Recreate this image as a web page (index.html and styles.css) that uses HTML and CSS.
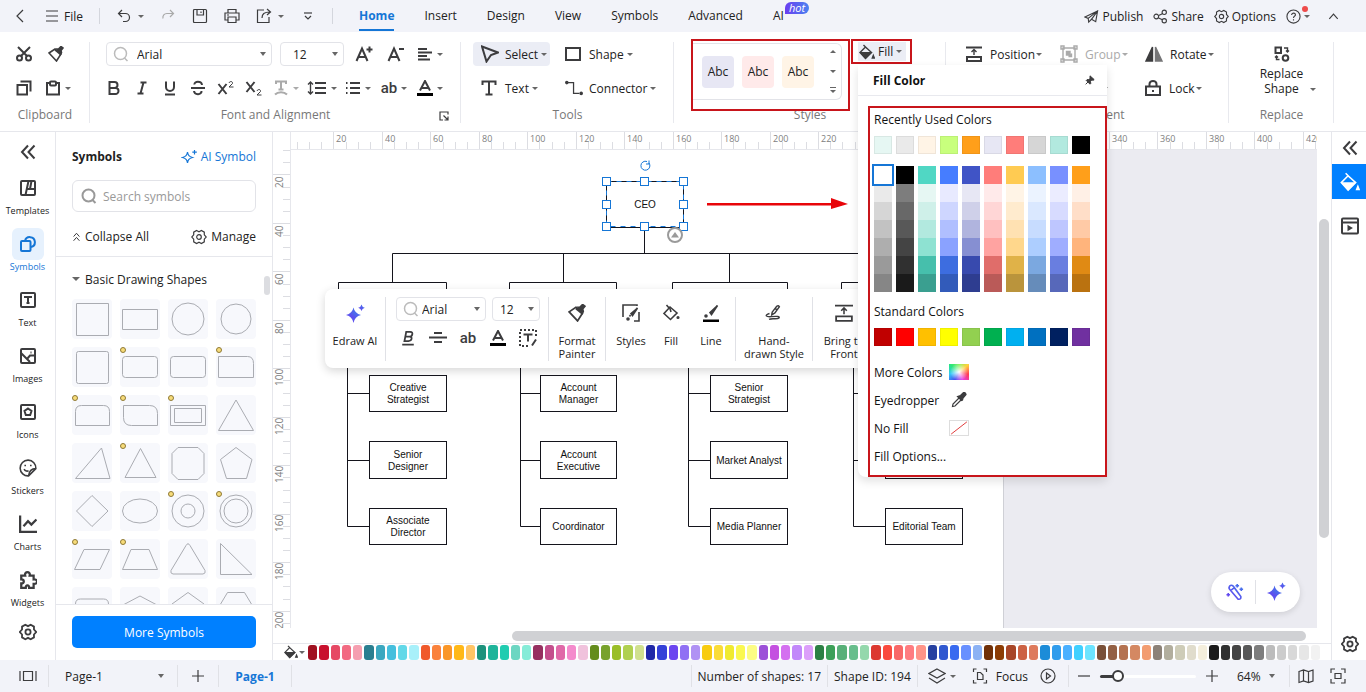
FILE: index.html
```html
<!DOCTYPE html>
<html lang="en">
<head>
    <meta charset="UTF-8">
    <title>Org Chart Editor</title>
    <link rel="stylesheet" href="styles.css">
</head>
<body>
    <!-- Icon set -->
    <svg class="sprite" aria-hidden="true">
        <defs>
            <linearGradient id="ai" x1="0" y1="1" x2="1" y2="0">
                <stop offset="0" stop-color="#6a3df0"/>
                <stop offset="1" stop-color="#3f7bea"/>
            </linearGradient>
            <symbol id="i-back" viewBox="0 0 16 16"><path d="M11 2 5 8l6 6"/></symbol>
            <symbol id="i-menu" viewBox="0 0 16 16"><path d="M2 3h12M2 8h12M2 13h12"/></symbol>
            <symbol id="i-undo" viewBox="0 0 16 16"><path d="M6 2 2.500 5.500 6 9M3 5.500h6.500a4 4 0 0 1 0 8H7"/></symbol>
            <symbol id="i-redo" viewBox="0 0 16 16"><path d="m10 2 3.500 3.500L10 9M13 5.500H7a4 4 0 0 0-4 5"/></symbol>
            <symbol id="i-save" viewBox="0 0 16 16"><path d="M1.500 2.500q0-1 1-1h11q1 0 1 1v11q0 1-1 1h-11q-1 0-1-1zM5 1.500v5.500h6.500V1.500M9 3.500v1.500"/></symbol>
            <symbol id="i-print" viewBox="0 0 16 16"><path d="M4 5V1.500h8V5M4 12H1V5h14v7h-3M4 9h8v5.500H4zM3 7h2"/></symbol>
            <symbol id="i-export" viewBox="0 0 16 16"><path d="M8 2H1.500v12.500H13V9M6 10c0-4 2-6 8-6M11 1l3.500 3L11 7"/></symbol>
            <symbol id="i-more" viewBox="0 0 10 10"><path d="M1 2h8"/><path d="m2 5 3 3 3-3"/></symbol>
            <symbol id="i-send" viewBox="0 0 16 16"><path d="M1 8.500 14.500 2 12.500 13.500 8 11l-3 3-.5-4zM4.500 10l10-8L8 11"/></symbol>
            <symbol id="i-share" viewBox="0 0 16 16"><circle cx="3.500" cy="8" r="2.500"/><circle cx="12" cy="3.500" r="2.300"/><circle cx="12" cy="12.500" r="2.300"/><path d="m6 7 4-2M6 9.500l4 2"/></symbol>
            <symbol id="i-gear" viewBox="0 0 16 16"><path d="M5.600 1.500 8 2.800l2.400-1.300 2.900 1.700v2.600l2 2.200-2 2.200v2.600l-2.900 1.700L8 13.200l-2.400 1.300-2.900-1.700v-2.600L.7 8l2-2.200V3.200z"/><circle cx="8" cy="8" r="2.300"/></symbol>
            <symbol id="i-help" viewBox="0 0 16 16"><circle cx="8" cy="8" r="7"/><path d="M6 6.500c0-3 4.500-2.500 4 0C9.800 7.500 8 8 8 9.500M8 11v1.200"/></symbol>
            <symbol id="i-up" viewBox="0 0 16 16"><path d="m3.500 10.500 4.500-5 4.500 5"/></symbol>
            <symbol id="i-cut" viewBox="0 0 16 16"><path d="m2 1 9 9M14 1l-9 9"/><circle cx="3.500" cy="12" r="2.500"/><circle cx="12.500" cy="12" r="2.500"/></symbol>
            <symbol id="i-brush" viewBox="0 0 16 16"><path d="M1 7 7 3l6 5-4.500 7z"/><path d="m7 4 6 5"/><path class="solid" d="m9 3 1.500 0L13 .5l2 1.500-2 2.500.5 2-1 1.500z"/></symbol>
            <symbol id="i-copy" viewBox="0 0 16 16"><path d="M1.500 5h9.500v9.500H1.500zM4.500 1.500h10v10"/></symbol>
            <symbol id="i-paste" viewBox="0 0 16 16"><path d="M5 3H2v11.500h12V3h-3"/><rect x="5" y="1.500" width="6" height="4" rx="1"/></symbol>
            <symbol id="i-search" viewBox="0 0 16 16"><circle cx="7.500" cy="7.500" r="6"/><path d="m11.500 12 3 3"/></symbol>
            <symbol id="i-grow" viewBox="0 0 18 16"><path d="M1.500 15 7 2.500 12.500 15M3.500 11h7M11.500 3.500h6M14.500.5v6"/></symbol>
            <symbol id="i-shrink" viewBox="0 0 18 16"><path d="M1.500 15 7 2.500 12.500 15M3.500 11h7M12 3h5"/></symbol>
            <symbol id="i-align" viewBox="0 0 16 16"><path d="M1 3h9M1 6.500h14M1 10h9M1 13.500h12"/></symbol>
            <symbol id="i-bold" viewBox="0 0 16 16"><path d="M3.500 2h5a2.800 2.800 0 0 1 0 6h-5zM3.500 8H9.500a3 3 0 0 1 0 6h-6z"/></symbol>
            <symbol id="i-italic" viewBox="0 0 16 16"><path d="M6.500 2.500h6M3.500 13.500h6M9.500 2.500l-3 11"/></symbol>
            <symbol id="i-under" viewBox="0 0 16 16"><path d="M4 1.500V7a4 4 0 0 0 8 0V1.500M3 14.500h10"/></symbol>
            <symbol id="i-strike" viewBox="0 0 16 16"><path d="M1 8h14M12 5c-.5-4.500-8-4-7.500-.5M4 11c.5 4.500 8 4 7.500 0"/></symbol>
            <symbol id="i-sup" viewBox="0 0 18 16"><path d="m1.500 4 8 10M9.500 4l-8 10"/><path class="thin" d="M12 3c.5-2 4-2 3.500.5L12 7h4.500"/></symbol>
            <symbol id="i-sub" viewBox="0 0 18 16"><path d="m1.500 2 8 10M9.500 2l-8 10"/><path class="thin" d="M12 11c.5-2 4-2 3.500.5L12 15h4.500"/></symbol>
            <symbol id="i-curve" viewBox="0 0 16 16"><path d="M3 4V1.500h10V4M8 1.500V9M5.500 9.500h5"/><path d="M2 14.500c3-3 9-3 12 0"/></symbol>
            <symbol id="i-spacing" viewBox="0 0 20 16"><path d="M8 3h11M8 8h11M8 13h11"/><path class="mid" d="M3.500 2v12M1 4.500 3.500 2 6 4.500M1 11.500 3.500 14 6 11.500"/></symbol>
            <symbol id="i-list" viewBox="0 0 16 16"><path d="M5 3h10M5 8h10M5 13h10M1 3h1.500M1 8h1.500M1 13h1.500"/></symbol>
            <symbol id="i-color" viewBox="0 0 16 16"><path d="M3 10.500 8 1l5 9.500M4.500 8h7"/><path class="bar" d="M0 14.500h16"/></symbol>
            <symbol id="i-launch" viewBox="0 0 10 10"><path d="M4 9H1V1h8v2.500M4.500 4.500 9 9M9 5.500V9H5.500"/></symbol>
            <symbol id="i-cursor" viewBox="0 0 18 18"><path d="M1 1.500 17 7.500l-7 2.500-4.500 6.500z"/></symbol>
            <symbol id="i-rect" viewBox="0 0 16 16"><path d="M1 2h14v12H1z"/></symbol>
            <symbol id="i-text" viewBox="0 0 16 16"><path d="M1.500 5V1.500h13V5M8 1.500v13M4.500 14.500h7"/></symbol>
            <symbol id="i-conn" viewBox="0 0 20 16"><path class="mid" d="M3 2h6.500v12H16"/><circle class="solid" cx="2" cy="2" r="1"/><circle class="solid" cx="18" cy="14" r="1"/></symbol>
            <symbol id="i-bucket" viewBox="0 0 16 16"><path d="m6.500 3 6 5.500-6 6L1 8.500zM4.500 1l3.500 3.500"/><path class="solid" d="M2 8.800h9.800L6.500 14z"/><path class="solid" d="M14.300 11.500 15.300 14h-2z"/></symbol>
            <symbol id="i-position" viewBox="0 0 16 16"><path d="M0 1.500h16M1 11h14v4H1z"/><path class="mid" d="M8 9V4M5.500 6 8 3.500 10.500 6"/></symbol>
            <symbol id="i-group" viewBox="0 0 18 18"><path class="mid" d="M3 3h12v12H3zM1 1h3v3H1zM14 1h3v3h-3zM1 14h3v3H1zM14 14h3v3h-3z"/><path class="solid mid" d="M6.500 6.500h3.500v3.500H6.500zM8.500 11.500h3V8.500"/></symbol>
            <symbol id="i-rotate" viewBox="0 0 18 16"><path class="solid mid" d="M7.500 1v14H1z"/><path class="solid mid faded" d="M10.500 1v14H17z"/></symbol>
            <symbol id="i-lock" viewBox="0 0 16 16"><path d="M1 6.500h14v8.500H1zM4.500 6.500V4a3.500 3 0 0 1 7 0v2.500M8 10v2"/></symbol>
            <symbol id="i-replace" viewBox="0 0 16 16"><path d="M1.500 1.500h5.500v5.500H1.500z"/><circle cx="11.500" cy="12" r="2.800"/><path class="mid" d="M10 2h3.500v4M12 4.500 13.500 6 15 4.500M5.500 13.500H2.500V10M1 11.500 2.500 10 4 11.500"/></symbol>
            <symbol id="i-pin" viewBox="0 0 12 12"><path class="solid" d="m6 1 5 4.500-1 .8-2-.3-1.500 2L7 10 6 11 1.500 6.500 2.500 5.500 4.500 5.500 6 4z"/><path d="M4 8 .8 11.200"/></symbol>
            <symbol id="i-dropper" viewBox="0 0 16 16"><path class="solid" d="m8 4 1.500-.5 3-3q2-.3 2.500 2l-3 3.500-.5 2-1 .5-4-4z"/><path d="M8 6 2 12l-.5 2.500L4 14l6-6"/></symbol>
            <symbol id="i-collapse" viewBox="0 0 16 16"><path d="M8 1.500 2 8l6 6.500M14.500 1.500 8.500 8l6 6.500"/></symbol>
            <symbol id="i-foldup" viewBox="0 0 10 12"><path d="m1.500 5.500 3.500-4 3.500 4M1.500 10.500l3.500-4 3.500 4"/></symbol>
            <symbol id="i-template" viewBox="0 0 16 16"><rect x="1" y="1" width="14" height="14" rx="1"/><path d="M8.500 1 5.500 15M7 9h8M11.500 1l-1.500 8"/></symbol>
            <symbol id="i-symbols" viewBox="0 0 16 16"><rect x="1" y="5" width="9.500" height="10" rx="1"/><path d="M5 5a5 5 0 1 1 6 6"/></symbol>
            <symbol id="i-textbox" viewBox="0 0 16 16"><rect x="1" y="1" width="14" height="14" rx="1"/><path d="M5 6V5h6v1M8 5v6M6.500 11h3"/></symbol>
            <symbol id="i-image" viewBox="0 0 16 16"><rect x="1" y="1" width="14" height="14" rx="1"/><path d="m1 5 9 9M7 11l3-3.500h4M10.500 4.500h1"/></symbol>
            <symbol id="i-icons" viewBox="0 0 16 16"><rect x="1" y="1" width="14" height="14" rx="1"/><path d="m8 4.500 3.500 2.500-1.300 4H5.800L4.500 7z"/></symbol>
            <symbol id="i-sticker" viewBox="0 0 16 16"><path class="mid" d="M15 8.500a7 7 0 1 0-6.500 6.500zM15 8.500c-4 0-6 2-6.500 6.500M5.500 5v1.500M10.500 5v1.500M4.500 9c1 2 3 2 4 1.500"/></symbol>
            <symbol id="i-chart" viewBox="0 0 16 16"><path d="M1 .5V15h15M4 10l4-4.500 3 3 4.500-4.500"/></symbol>
            <symbol id="i-widget" viewBox="0 0 16 16"><path d="M2 4h3.500c-1-4 5-4 4 0H13v3.500c4-.5 4 4.500 0 4V15H9c0-3-3-3-3 0H2v-4c3 0 3-3.500 0-3.500z"/></symbol>
            <symbol id="i-spark" viewBox="0 0 16 16"><path d="M6.500 3c.6 3.500 1.500 4.500 5 5.500-3.500 1-4.400 2-5 5.500-.6-3.500-1.500-4.500-5-5.500 3.500-1 4.400-2 5-5.500zM13.500 1v4.500M11.300 3.200h4.500"/></symbol>
            <symbol id="i-aistar" viewBox="0 0 20 20"><path d="M8.500 3.500q1.200 6 7.500 7.500-6.300 1.500-7.500 8Q7.300 12.500 1 11q6.300-1.500 7.500-7.500z"/><path d="M7 8h3l2.500 3L10 14H7l-2.500-3z"/><path d="M16.500.5q.5 2.500 3.300 3.200-2.800.8-3.300 3.300-.5-2.500-3.300-3.300Q16 3 16.500.5z"/></symbol>
            <symbol id="i-wand" viewBox="0 0 20 20"><path d="M4 3.500q2-2 4 0l8.500 11.500q.5 3.500-3 3L4.500 7.500Q2.500 5.500 4 3.500zM5 8.500 9 5.500M12.500 1v4M10.500 3h4M17 5v4M15 7h4M2.500 11v4M.5 13h4"/></symbol>
            <symbol id="i-styles" viewBox="0 0 18 18"><path d="M1 13V1h14v1M17 8v9h-5"/><path class="solid" d="M15.500 4 9 9.500l1.500 2z"/><circle class="solid" cx="6" cy="15" r="1"/><path d="m8.500 11-1 1.500"/></symbol>
            <symbol id="i-fill" viewBox="0 0 18 18"><path d="m8 3 7 6-6.500 6.500L2 9.500zM4.500 1l3 3.500"/><path d="m7.500 3 1.500 5"/><circle class="solid" cx="16" cy="13.500" r=".8"/></symbol>
            <symbol id="i-line" viewBox="0 0 18 18"><path class="solid" d="m15.500 1.500-7.500 7 1.500 2z"/><circle class="solid" cx="4" cy="12" r="1"/><path class="bar" d="M1 17h16"/></symbol>
            <symbol id="i-hand" viewBox="0 0 20 18"><path d="m8 8 5-6.500q2-1.500 3 .5l-5 7-3.500 2zM5 9.500c-6 2-4 4 2 3.500s10-.5 8.500 1.500-8 0-11 1.500M11.500 4l2.500 2"/></symbol>
            <symbol id="i-ubold" viewBox="0 0 16 18"><path d="M6 2h4.500q3 .2 2.300 3T9 7.500H5zM5 7.500h5q2.500.3 2 2.500t-3.500 2.500H4zM1.500 16.500h13"/></symbol>
            <symbol id="i-center" viewBox="0 0 18 16"><path d="M5 3h8M0 7.500h18M5 12h8"/></symbol>
            <symbol id="i-editbox" viewBox="0 0 18 18"><path stroke-dasharray="2 2" d="M17 7V1H1v16h9"/><path d="M5.500 6.500V5.500h7v1M9 5.500v7M13 16.500l4-6"/></symbol>
            <symbol id="i-pages" viewBox="0 0 18 12"><path d="M1 1v10M4.500 1.500h9v9h-9zM17 1v10"/></symbol>
            <symbol id="i-plus" viewBox="0 0 14 14"><path d="M1 7h12M7 1v12"/></symbol>
            <symbol id="i-minus" viewBox="0 0 14 14"><path d="M1 7h12"/></symbol>
            <symbol id="i-layers" viewBox="0 0 18 16"><path d="m9 1 8 4.500L9 10 1 5.500zM1 10l8 5 8-5"/></symbol>
            <symbol id="i-focus" viewBox="0 0 16 16"><path d="M4.500 1H1.500v3M1.500 12v3h3M11.500 1h3v3M14.500 12v3h-3M5.500 4.500h3L11 7v4.500H5.500z"/></symbol>
            <symbol id="i-play" viewBox="0 0 16 16"><circle cx="8" cy="8" r="7"/><path d="m6.500 5 4 3-4 3z"/></symbol>
            <symbol id="i-map" viewBox="0 0 16 14"><path d="m1 2.500 4.500-1.500 5 1.500L15 1v11l-4.500 1.500-5-1.500L1 13.500zM5.500 1v11M10.500 2.500v11"/></symbol>
            <symbol id="i-fit" viewBox="0 0 16 16"><path d="M5 1H1v4M11 1h4v4M1 11v4h4M15 11v4h-4M5 5.500h6v5H5z"/></symbol>
            <symbol id="i-present" viewBox="0 0 18 18"><rect x="1" y="1.500" width="16" height="15" rx="1"/><path d="M1 5.500h16"/><path class="solid" d="m7.500 9.500 2.500 1.500-2.500 1.500z"/></symbol>
        </defs>
    </svg>

    <header class="titlebar">
        <button class="tool" aria-label="Back"><svg class="icon thin"><use href="#i-back"/></svg></button>
        <button class="file-button"><svg class="icon thin"><use href="#i-menu"/></svg>File</button>
        <span class="divider"></span>
        <div class="quick">
            <button class="tool wide" aria-label="Undo"><svg class="icon thin"><use href="#i-undo"/></svg><i class="caret"></i></button>
            <button class="tool off" aria-label="Redo"><svg class="icon thin"><use href="#i-redo"/></svg></button>
            <button class="tool" aria-label="Save"><svg class="icon thin"><use href="#i-save"/></svg></button>
            <button class="tool" aria-label="Print"><svg class="icon thin"><use href="#i-print"/></svg></button>
            <button class="tool wide" aria-label="Export"><svg class="icon thin"><use href="#i-export"/></svg><i class="caret"></i></button>
            <button class="tool" aria-label="More"><svg class="icon small"><use href="#i-more"/></svg></button>
        </div>
        <span class="divider"></span>
        <nav class="tabs">
            <a href="#" class="active">Home</a>
            <a href="#">Insert</a>
            <a href="#">Design</a>
            <a href="#">View</a>
            <a href="#">Symbols</a>
            <a href="#">Advanced</a>
            <a href="#">AI<span class="hot">hot</span></a>
        </nav>
        <div class="title-actions">
            <button><svg class="icon thin"><use href="#i-send"/></svg>Publish</button>
            <button><svg class="icon thin"><use href="#i-share"/></svg>Share</button>
            <button><svg class="icon thin"><use href="#i-gear"/></svg>Options</button>
            <button class="help" aria-label="Help"><svg class="icon thin"><use href="#i-help"/></svg><i class="caret"></i></button>
            <button aria-label="Collapse ribbon"><svg class="icon thin"><use href="#i-up"/></svg></button>
        </div>
    </header>

    <section class="ribbon">
        <div class="group clipboard">
            <div class="row">
                <button class="tool" aria-label="Cut"><svg class="icon"><use href="#i-cut"/></svg></button>
                <button class="tool" aria-label="Format painter"><svg class="icon medium"><use href="#i-brush"/></svg></button>
            </div>
            <div class="row">
                <button class="tool" aria-label="Copy"><svg class="icon"><use href="#i-copy"/></svg></button>
                <button class="tool wide" aria-label="Paste"><svg class="icon"><use href="#i-paste"/></svg><i class="caret"></i></button>
            </div>
            <p class="group-name">Clipboard</p>
        </div>

        <div class="group font">
            <div class="row">
                <div class="combo family"><svg class="icon"><use href="#i-search"/></svg><select aria-label="Font"><option>Arial</option></select></div>
                <div class="combo size"><select aria-label="Font size"><option>12</option></select></div>
                <button class="tool" aria-label="Increase font size"><svg class="icon broad"><use href="#i-grow"/></svg></button>
                <button class="tool" aria-label="Decrease font size"><svg class="icon broad"><use href="#i-shrink"/></svg></button>
                <button class="tool wide" aria-label="Align"><svg class="icon"><use href="#i-align"/></svg><i class="caret"></i></button>
            </div>
            <div class="row marks">
                <button class="tool" aria-label="Bold"><svg class="icon"><use href="#i-bold"/></svg></button>
                <button class="tool" aria-label="Italic"><svg class="icon"><use href="#i-italic"/></svg></button>
                <button class="tool" aria-label="Underline"><svg class="icon"><use href="#i-under"/></svg></button>
                <button class="tool" aria-label="Strikethrough"><svg class="icon"><use href="#i-strike"/></svg></button>
                <button class="tool" aria-label="Superscript"><svg class="icon broad"><use href="#i-sup"/></svg></button>
                <button class="tool" aria-label="Subscript"><svg class="icon broad"><use href="#i-sub"/></svg></button>
                <button class="tool wide off" aria-label="Curved text"><svg class="icon"><use href="#i-curve"/></svg><i class="caret"></i></button>
                <button class="tool wide" aria-label="Line spacing"><svg class="icon large"><use href="#i-spacing"/></svg><i class="caret"></i></button>
                <button class="tool wide" aria-label="List"><svg class="icon"><use href="#i-list"/></svg><i class="caret"></i></button>
                <button class="tool wide case">ab<i class="caret"></i></button>
                <button class="tool wide" aria-label="Font color"><svg class="icon"><use href="#i-color"/></svg><i class="caret"></i></button>
            </div>
            <p class="group-name">Font and Alignment</p>
            <button class="launcher" aria-label="Font settings"><svg class="icon small"><use href="#i-launch"/></svg></button>
        </div>

        <div class="group tools">
            <div class="row">
                <button class="command selected"><svg class="icon broad"><use href="#i-cursor"/></svg>Select<i class="caret"></i></button>
                <button class="command"><svg class="icon"><use href="#i-rect"/></svg>Shape<i class="caret"></i></button>
            </div>
            <div class="row">
                <button class="command"><svg class="icon"><use href="#i-text"/></svg>Text<i class="caret"></i></button>
                <button class="command"><svg class="icon broad"><use href="#i-conn"/></svg>Connector<i class="caret"></i></button>
            </div>
            <p class="group-name">Tools</p>
        </div>

        <div class="group styles">
            <div class="styles-body">
                <div class="gallery">
                    <button class="style lilac">Abc</button>
                    <button class="style rose">Abc</button>
                    <button class="style cream">Abc</button>
                    <div class="gallery-nav">
                        <button aria-label="Previous styles"><i class="caret up"></i></button>
                        <button aria-label="Next styles"><i class="caret"></i></button>
                        <button aria-label="All styles"><i class="caret lined"></i></button>
                    </div>
                    <span class="callout"></span>
                </div>
                <div class="fill">
                    <button class="fill-button"><svg class="icon"><use href="#i-bucket"/></svg>Fill<i class="caret"></i></button>
                    <span class="callout"></span>
                    <div class="popover">
                        <div class="popover-head">Fill Color<button aria-label="Pin"><svg class="icon small"><use href="#i-pin"/></svg></button></div>
                        <div class="popover-body">
                            <h3>Recently Used Colors</h3>
                            <div class="swatches" id="recent"></div>
                            <div class="swatches theme" id="theme"></div>
                            <h3>Standard Colors</h3>
                            <div class="swatches" id="standard"></div>
                            <div class="fill-options">
                                <button><span>More Colors</span><i class="spectrum"></i></button>
                                <button><span>Eyedropper</span><svg class="icon"><use href="#i-dropper"/></svg></button>
                                <button><span>No Fill</span><svg class="no-fill" viewBox="0 0 20 16"><path d="M1 15 19 1"/></svg></button>
                                <button><span>Fill Options...</span></button>
                            </div>
                        </div>
                    </div>
                </div>
            </div>
            <p class="group-name">Styles</p>
        </div>

        <div class="group arrange">
            <div class="row">
                <button class="command"><svg class="icon"><use href="#i-position"/></svg>Position<i class="caret"></i></button>
                <button class="command off"><svg class="icon broad"><use href="#i-group"/></svg>Group<i class="caret"></i></button>
                <button class="command"><svg class="icon broad"><use href="#i-rotate"/></svg>Rotate<i class="caret"></i></button>
            </div>
            <div class="row">
                <button class="command" aria-label="Align"><svg class="icon"><use href="#i-align"/></svg></button>
                <button class="command size-command" aria-label="Size"><svg class="icon"><use href="#i-rect"/></svg><i class="caret"></i></button>
                <button class="command"><svg class="icon"><use href="#i-lock"/></svg>Lock<i class="caret"></i></button>
            </div>
            <p class="group-name">Arrangement</p>
        </div>

        <div class="group replace">
            <button class="replace-button">
                <svg class="icon"><use href="#i-replace"/></svg>
                <span>Replace<br>Shape</span>
                <i class="caret"></i>
            </button>
            <p class="group-name">Replace</p>
        </div>
    </section>

    <main>
        <nav class="rail">
            <button class="rail-top" aria-label="Collapse"><svg class="icon"><use href="#i-collapse"/></svg></button>
            <a href="#"><span><svg class="icon"><use href="#i-template"/></svg></span>Templates</a>
            <a href="#" class="active"><span><svg class="icon"><use href="#i-symbols"/></svg></span>Symbols</a>
            <a href="#"><span><svg class="icon"><use href="#i-textbox"/></svg></span>Text</a>
            <a href="#"><span><svg class="icon"><use href="#i-image"/></svg></span>Images</a>
            <a href="#"><span><svg class="icon"><use href="#i-icons"/></svg></span>Icons</a>
            <a href="#"><span><svg class="icon broad"><use href="#i-sticker"/></svg></span>Stickers</a>
            <a href="#"><span><svg class="icon broad"><use href="#i-chart"/></svg></span>Charts</a>
            <a href="#"><span><svg class="icon broad"><use href="#i-widget"/></svg></span>Widgets</a>
            <button class="rail-bottom" aria-label="Settings"><svg class="icon broad medium"><use href="#i-gear"/></svg></button>
        </nav>

        <aside class="library">
            <div class="library-head">
                <div class="between">
                    <h2>Symbols</h2>
                    <a href="#" class="ai-link"><svg class="icon thin"><use href="#i-spark"/></svg>AI Symbol</a>
                </div>
                <label class="search">
                    <svg class="icon"><use href="#i-search"/></svg>
                    <input type="text" placeholder="Search symbols" aria-label="Search symbols">
                </label>
                <div class="between">
                    <button><svg class="icon small"><use href="#i-foldup"/></svg>Collapse All</button>
                    <button><svg class="icon thin"><use href="#i-gear"/></svg>Manage</button>
                </div>
            </div>
            <div class="library-body">
                <button class="section"><i class="caret big"></i>Basic Drawing Shapes</button>
                <div class="shapes" id="shapes"></div>
                <span class="thumb"></span>
            </div>
            <div class="library-foot"><button>More Symbols</button></div>
        </aside>

        <section class="workspace">
            <div class="ruler-top"><svg id="ruler-x"></svg></div>
            <div class="stage">
                <div class="ruler-left"><svg id="ruler-y"></svg></div>
                <div class="canvas">
                    <div class="paper"></div>
                    <svg class="diagram" id="diagram">
                        <g class="wires">
                            <path d="M353.500 77v26M101.500 132v-28.500h510V132M272.500 103.500V132M438.500 103.500V132"/>
                            <path d="M47.500 132.500h108v46h-108zM218.500 132.500h107v46h-107zM381.500 132.500h115v46h-115zM550.500 132.500h121v46h-121z"/>
                            <path d="M56.500 178.500v198h22M56.500 243.500h22M56.500 310.500h22"/>
                            <path d="M229.500 178.500v198h20M229.500 243.500h20M229.500 310.500h20"/>
                            <path d="M397.500 178.500v198h22M397.500 243.500h22M397.500 310.500h22"/>
                            <path d="M562.500 178.500v198h32M562.500 243.500h32M562.500 310.500h32"/>
                        </g>
                        <g id="nodes"></g>
                        <g class="selection">
                            <rect x="315.500" y="31.500" width="77" height="45"/>
                            <g id="handles"></g>
                            <path class="spin" d="M358 13a4.500 4.500 0 1 1-2-1.500M358 10.500v3.500h-3"/>
                        </g>
                        <g class="fold">
                            <circle cx="384" cy="85" r="7"/>
                            <path d="m380 87.500 4-5.500 4 5.500z"/>
                        </g>
                        <path class="arrow" d="M416 53h124v-5l17 6-17 5v-3.500H416z"/>
                    </svg>

                    <div class="floatbar">
                        <button class="float-item ai"><svg class="icon ai-icon"><use href="#i-aistar"/></svg>Edraw AI</button>
                        <span class="divider"></span>
                        <div class="float-font">
                            <div class="row">
                                <div class="combo family"><svg class="icon"><use href="#i-search"/></svg><select aria-label="Font"><option>Arial</option></select></div>
                                <div class="combo size"><select aria-label="Font size"><option>12</option></select></div>
                            </div>
                            <div class="row">
                                <button class="tool" aria-label="Bold"><svg class="icon"><use href="#i-ubold"/></svg></button>
                                <button class="tool" aria-label="Center"><svg class="icon broad"><use href="#i-center"/></svg></button>
                                <button class="tool case">ab</button>
                                <button class="tool" aria-label="Font color"><svg class="icon"><use href="#i-color"/></svg></button>
                                <button class="tool" aria-label="Edit text"><svg class="icon broad"><use href="#i-editbox"/></svg></button>
                            </div>
                        </div>
                        <span class="divider"></span>
                        <button class="float-item painter"><svg class="icon"><use href="#i-brush"/></svg>Format<br>Painter</button>
                        <span class="divider"></span>
                        <button class="float-item"><svg class="icon"><use href="#i-styles"/></svg>Styles</button>
                        <button class="float-item"><svg class="icon"><use href="#i-fill"/></svg>Fill</button>
                        <button class="float-item"><svg class="icon"><use href="#i-line"/></svg>Line</button>
                        <span class="divider"></span>
                        <button class="float-item hand"><svg class="icon"><use href="#i-hand"/></svg>Hand-<br>drawn Style</button>
                        <span class="divider"></span>
                        <button class="float-item front"><svg class="icon"><use href="#i-position"/></svg>Bring to<br>Front</button>
                    </div>

                    <div class="assist">
                        <button aria-label="Magic wand"><svg class="icon broad ai-line"><use href="#i-wand"/></svg></button>
                        <span class="divider"></span>
                        <button aria-label="AI"><svg class="icon large ai-icon"><use href="#i-aistar"/></svg></button>
                    </div>
                </div>
                <div class="scroll-y"><span></span></div>
            </div>
            <div class="scroll-x"><span></span></div>
            <div class="palette">
                <button aria-label="Fill color"><svg class="icon"><use href="#i-bucket"/></svg><i class="caret"></i></button>
                <div class="palette-colors" id="palette"></div>
            </div>
        </section>

        <nav class="right-rail">
            <button aria-label="Expand"><svg class="icon"><use href="#i-collapse"/></svg></button>
            <button class="active" aria-label="Fill panel"><svg class="icon large"><use href="#i-bucket"/></svg></button>
            <button aria-label="Presentation"><svg class="icon broad"><use href="#i-present"/></svg></button>
            <button class="last" aria-label="Settings"><svg class="icon broad medium"><use href="#i-gear"/></svg></button>
        </nav>
    </main>

    <footer class="statusbar">
        <button class="status-tool" aria-label="Page panel"><svg class="icon broad thin"><use href="#i-pages"/></svg></button>
        <span class="divider"></span>
        <div class="combo page"><select aria-label="Page"><option>Page-1</option></select></div>
        <span class="divider"></span>
        <button class="add" aria-label="Add page"><svg class="icon thin"><use href="#i-plus"/></svg></button>
        <span class="divider"></span>
        <a href="#" class="page-tab">Page-1</a>
        <span class="divider"></span>
        <div class="status-right">
            <span class="divider"></span>
            <span class="stat">Number of shapes: 17</span>
            <span class="divider"></span>
            <span class="stat">Shape ID: 194</span>
            <span class="divider"></span>
            <button class="layers" aria-label="Layers"><svg class="icon broad thin"><use href="#i-layers"/></svg><i class="caret"></i></button>
            <button class="focus"><svg class="icon thin"><use href="#i-focus"/></svg>Focus</button>
            <button class="play" aria-label="Play"><svg class="icon thin"><use href="#i-play"/></svg></button>
            <span class="divider"></span>
            <button class="zoom-step" aria-label="Zoom out"><svg class="icon thin"><use href="#i-minus"/></svg></button>
            <input type="range" min="0" max="100" value="14" aria-label="Zoom">
            <button class="zoom-step" aria-label="Zoom in"><svg class="icon thin"><use href="#i-plus"/></svg></button>
            <div class="combo percent"><select aria-label="Zoom level"><option>64%</option></select></div>
            <span class="divider"></span>
            <button class="status-tool" aria-label="Overview"><svg class="icon thin"><use href="#i-map"/></svg></button>
            <button class="status-tool" aria-label="Fit"><svg class="icon thin"><use href="#i-fit"/></svg></button>
        </div>
    </footer>
    <script src="script.js"></script>
</body>
</html>
```
FILE: styles.css
```css
* {
    box-sizing: border-box;
}
body {
    margin: 0;
    height: 100vh;
    display: flex;
    flex-direction: column;
    overflow: hidden;
    font-family: "Open Sans", "Noto Sans", sans-serif;
    font-size: 12px;
    color: #222;
    background: #fff;
}
button, input, select {
    font: inherit;
    color: inherit;
}
button {
    display: flex;
    align-items: center;
    padding: 0;
    border: none;
    background: none;
    white-space: nowrap;
    cursor: pointer;
}
a {
    color: inherit;
    text-decoration: none;
}
h2, h3, p {
    margin: 0;
    font-size: 12px;
    font-weight: normal;
}

/* Icons */
.sprite {
    position: absolute;
    width: 0;
    height: 0;
}
.icon {
    width: 16px;
    height: 16px;
    flex: none;
    fill: none;
    stroke: currentColor;
    stroke-width: 2;
    color: #3c3c3e;
}
.icon.thin {
    stroke-width: 1.2;
}
.icon.medium {
    stroke-width: 1.6;
}
.icon.broad {
    width: 18px;
    height: 18px;
}
.icon.large {
    width: 20px;
    height: 20px;
}
.icon.small {
    width: 10px;
    height: 10px;
    stroke-width: 1.2;
}
.solid {
    fill: currentColor;
}
.thin {
    stroke-width: 1;
}
.mid {
    stroke-width: 1.4;
}
.faded {
    opacity: 0.7;
}
.bar {
    stroke: #000;
    stroke-width: 3;
}
.ai-icon {
    fill: url(#ai);
    stroke: none;
}
.icon.ai-line {
    stroke: url(#ai);
    stroke-width: 1.8;
}
.caret {
    width: 0;
    height: 0;
    flex: none;
    border: 3px solid transparent;
    border-top: 3px solid #666;
    border-bottom: none;
}
.caret.big {
    border-width: 4px;
    border-bottom: none;
}
.caret.up {
    border-top: none;
    border-bottom: 3px solid #666;
}
.caret.lined {
    position: relative;
}
.caret.lined::before {
    content: "";
    position: absolute;
    left: -3px;
    top: -6px;
    width: 6px;
    height: 1px;
    background: #666;
}
.divider {
    width: 1px;
    flex: none;
    background: #e0e1e6;
}
.off, .off .icon {
    color: #aaa;
}
.off .caret {
    border-top-color: #aaa;
}
.tool {
    width: 32px;
    height: 28px;
    justify-content: center;
}
.tool.wide {
    width: 36px;
    gap: 4px;
}
.callout {
    position: absolute;
    border: 2px solid #c8151b;
    pointer-events: none;
}

/* Drop-downs */
.combo {
    position: relative;
    display: flex;
    align-items: center;
    height: 24px;
    border: 1px solid #e2e3e8;
    border-radius: 4px;
}
.combo select {
    width: 100%;
    height: 100%;
    border: none;
    background: none;
    appearance: none;
    padding: 0 12px;
}
.combo .icon {
    margin-left: 6px;
    color: #bbb;
    stroke-width: 1.5;
}
.combo .icon + select {
    padding-left: 8px;
}
.combo::after {
    content: "";
    position: absolute;
    right: 5px;
    border: 3px solid transparent;
    border-top: 4px solid #666;
    border-bottom: none;
    pointer-events: none;
}

/* Title bar */
.titlebar {
    display: flex;
    align-items: center;
    height: 32px;
    flex: none;
    padding: 0 25px 0 4px;
    background: #f2f3f9;
}
.titlebar .divider {
    height: 16px;
    background: #d4d6dd;
}
.file-button {
    gap: 4px;
    margin: 0 16px 0 8px;
}
.quick {
    display: flex;
    margin: 0 8px;
}
.quick .tool.wide {
    width: 44px;
    gap: 6px;
}
.tabs {
    display: flex;
    gap: 30px;
    height: 32px;
    margin-left: 26px;
    line-height: 32px;
}
.tabs a {
    position: relative;
}
.tabs .active {
    font-weight: bold;
    color: #1576d6;
    border-bottom: 2px solid #1576d6;
    height: 31px;
}
.hot {
    position: absolute;
    left: 12px;
    top: 2px;
    padding: 0 4px;
    border-radius: 6px 6px 6px 0;
    background: linear-gradient(90deg, #6a3df0, #4a83f0);
    color: #fff;
    font-size: 11px;
    font-style: italic;
    line-height: 12px;
}
.title-actions {
    display: flex;
    gap: 10px;
    margin-left: auto;
}
.title-actions button {
    gap: 3px;
}
.title-actions .icon {
    width: 15px;
    height: 15px;
}
.help {
    position: relative;
    margin-right: 6px;
}
.help::after {
    content: "";
    position: absolute;
    right: 2px;
    top: -2px;
    width: 6px;
    height: 6px;
    border-radius: 50%;
    background: #ee4b4b;
}

/* Ribbon */
.ribbon {
    position: relative;
    z-index: 2;
    display: flex;
    flex: none;
    height: 100px;
    padding-top: 5px;
    border-bottom: 1px solid #e6e7ec;
    background: #fff;
}
.group {
    position: relative;
    display: flex;
    flex-direction: column;
    flex: none;
    padding-left: 12px;
}
.group::after {
    content: "";
    position: absolute;
    right: 0;
    top: 5px;
    bottom: 8px;
    width: 1px;
    background: #e8e9ee;
}
.row {
    display: flex;
    align-items: center;
    height: 34px;
}
.group-name {
    margin-left: -12px;
    line-height: 20px;
    color: #777;
    text-align: center;
}
.clipboard {
    width: 90px;
    padding-left: 8px;
}
.clipboard .group-name {
    margin-left: -8px;
}
.font {
    width: 371px;
    padding-left: 10px;
}
.font .group-name {
    margin-left: -10px;
}
.font .combo.family {
    width: 166px;
    margin: 0 8px 0 6px;
}
.font .combo.size {
    width: 64px;
    margin-right: 4px;
}
.marks .tool {
    width: 28px;
}
.marks .tool.wide {
    width: 36px;
}
.tool.case {
    font-family: Roboto, sans-serif;
    font-size: 15px;
    font-weight: 500;
    color: #3c3c3e;
}
.launcher {
    position: absolute;
    right: 12px;
    bottom: 10px;
}
.command {
    gap: 3px;
    height: 24px;
    padding: 0 3px 0 8px;
    border-radius: 4px;
}
.command .icon {
    margin-right: 5px;
}
.command .icon.broad {
    margin-right: 3px;
}
.command.selected {
    background: #ebedf5;
}
.tools {
    width: 213px;
}
.tools .row {
    display: grid;
    grid-template-columns: 76px 1fr;
    column-gap: 8px;
    justify-items: start;
}
.styles {
    z-index: 1;
    width: 272px;
    padding-left: 17px;
}
.styles .group-name {
    margin-left: -17px;
}
.styles-body {
    position: relative;
    z-index: 1;
    display: flex;
    gap: 16px;
    height: 68px;
}
.gallery {
    position: relative;
    display: flex;
    align-items: center;
    gap: 8px;
    width: 151px;
    height: 57px;
    margin-top: 6px;
    padding-left: 11px;
    border: 1px solid #e2e3e8;
    border-left: none;
    border-radius: 0 6px 6px 0;
}
.gallery .callout {
    left: 0;
    top: -5px;
    width: 159px;
    height: 72px;
}
.style {
    width: 32px;
    height: 32px;
    justify-content: center;
    border-radius: 4px;
}
.lilac {
    background: #e7e7f4;
}
.rose {
    background: #ffeaea;
}
.cream {
    background: #fff4e6;
}
.gallery-nav {
    display: flex;
    flex-direction: column;
    gap: 1px;
    margin: 0 5px 0 auto;
}
.gallery-nav button {
    height: 19px;
}
.fill {
    position: relative;
}
.fill-button {
    gap: 3px;
    height: 19px;
    margin-top: 5px;
    padding: 0 4px 0 1px;
    background: #ebedf5;
}
.fill-button .icon, .palette .icon {
    stroke-width: 1.4;
}
.fill .callout {
    left: -7px;
    top: 2px;
    width: 61px;
    height: 25px;
}
.popover {
    position: absolute;
    left: 0;
    top: 28px;
    width: 249px;
    background: #fff;
    border-radius: 0 0 4px 8px;
    box-shadow: 0 4px 10px rgba(0, 0, 0, 0.12);
    color: #111;
}
.popover-head {
    display: flex;
    justify-content: space-between;
    height: 31px;
    padding: 0 12px 0 15px;
    line-height: 31px;
    font-weight: bold;
    border-bottom: 1px solid #e8e9ee;
}
.popover-body {
    margin: 10px 0 0 10px;
    padding: 0 4px 5px;
    border: 2px solid #c8151b;
}
.popover-body h3 {
    margin-bottom: 4px;
    line-height: 24px;
}
.swatches {
    display: grid;
    grid-template-columns: repeat(10, 18px);
    column-gap: 4px;
    margin-bottom: 12px;
}
.swatches button {
    height: 18px;
    border: 1px solid rgba(0, 0, 0, 0.06);
}
.swatches.theme {
    margin-bottom: 8px;
}
.theme button {
    border: none;
}
.theme button:first-child {
    position: relative;
    outline: 2px solid #1576d6;
}
.fill-options button {
    width: 100%;
    height: 28px;
}
.fill-options span {
    width: 75px;
    text-align: left;
}
.fill-options .icon {
    margin-left: 2px;
    stroke-width: 1.2;
}
.spectrum {
    width: 20px;
    height: 16px;
    background: radial-gradient(circle, #fff, transparent 70%), conic-gradient(#7cf04a, #ffd23c, #ff3c50, #e63ce6, #4646f0, #32c8fa, #28e67d, #7cf04a);
}
.no-fill {
    width: 20px;
    height: 16px;
    border: 1px solid #ddd;
    stroke: #d22;
}
.arrange {
    width: 283px;
}
.arrange .row {
    display: grid;
    grid-template-columns: 94px 85px 1fr;
    justify-items: start;
}
.arrange .command {
    gap: 1px;
}
.arrange .command .icon {
    margin-right: 7px;
}
.arrange .command .icon.broad {
    margin-right: 6px;
}
.size-command {
    width: 59px;
    justify-content: space-between;
}
.replace {
    width: 105px;
    padding: 0;
}
.replace .group-name {
    margin: 0;
}
.replace-button {
    position: relative;
    flex-direction: column;
    height: 68px;
    padding-top: 9px;
    gap: 4px;
    line-height: 15px;
}
.replace-button .caret {
    position: absolute;
    right: 18px;
    bottom: 14px;
}

/* Left rail */
main {
    display: flex;
    flex: 1;
    min-height: 0;
}
.rail {
    display: flex;
    flex-direction: column;
    flex: none;
    width: 56px;
    border-right: 1px solid #e6e7ec;
    font-size: 9px;
}
.rail button {
    justify-content: center;
    flex: none;
}
.rail-top {
    height: 40px;
}
.rail-bottom {
    height: 24px;
}
.rail a {
    display: flex;
    flex-direction: column;
    align-items: center;
    height: 56px;
    line-height: 14px;
}
.rail a span {
    display: flex;
    align-items: center;
    justify-content: center;
    width: 32px;
    height: 32px;
    border-radius: 6px;
}
.rail .active, .rail .active .icon {
    color: #1576d6;
}
.rail .active span {
    background: #e6f1fd;
}

/* Symbol library */
.library {
    display: flex;
    flex-direction: column;
    flex: none;
    width: 217px;
    border-right: 1px solid #e6e7ec;
}
.library-head {
    padding: 13px 16px 7px;
    border-bottom: 1px solid #e6e7ec;
}
.between {
    display: flex;
    justify-content: space-between;
    height: 24px;
    line-height: 24px;
}
.library h2 {
    font-weight: bold;
}
.between button, .ai-link {
    display: flex;
    align-items: center;
    gap: 4px;
}
.between .icon.small {
    width: 9px;
}
.ai-link, .ai-link .icon {
    color: #1576d6;
}
.search {
    display: flex;
    align-items: center;
    gap: 6px;
    height: 32px;
    margin: 11px 0 13px;
    padding: 0 8px;
    border: 1px solid #e2e3e8;
    border-radius: 6px;
}
.search .icon {
    color: #999;
}
.search input {
    width: 100%;
    padding: 0;
    border: none;
    background: none;
    outline: none;
}
.search input::placeholder {
    color: #999;
}
.library-body {
    position: relative;
    flex: 1;
    min-height: 0;
    overflow: hidden;
    padding: 12px 16px 0;
}
.section {
    gap: 5px;
    height: 20px;
    margin-bottom: 10px;
}
.shapes {
    display: grid;
    grid-template-columns: repeat(4, 40px);
    gap: 8px;
}
.shapes button {
    height: 40px;
    border-radius: 4px;
    background: #f7f8fc;
}
.shapes svg {
    width: 40px;
    height: 40px;
    fill: none;
    stroke: #aaacb2;
}
.shapes .knob {
    fill: #f7dc7a;
    stroke: #8f7a35;
}
.thumb {
    position: absolute;
    right: 2px;
    top: 19px;
    width: 6px;
    height: 19px;
    border-radius: 3px;
    background: #dcdde1;
}
.library-foot {
    padding: 11px 16px 12px;
    border-top: 1px solid #e6e7ec;
}
.library-foot button {
    justify-content: center;
    width: 100%;
    height: 32px;
    border-radius: 5px;
    background: #0080ff;
    color: #fff;
}

/* Workspace */
.workspace {
    display: flex;
    flex-direction: column;
    flex: 1;
    min-width: 0;
}
.ruler-top {
    height: 18px;
    flex: none;
    margin: 0 14px 0 17px;
    border-bottom: 1px solid #e6e7ec;
    border-left: 1px solid #e6e7ec;
}
.ruler-left {
    width: 18px;
    flex: none;
    border-right: 1px solid #e6e7ec;
}
.ruler-top svg, .ruler-left svg {
    display: block;
    width: 100%;
    height: 100%;
    font-size: 9px;
    fill: #808080;
}
.ruler-left svg {
    font-size: 10px;
}
.ruler-top path, .ruler-left path {
    stroke: #dcdde2;
}
.stage {
    display: flex;
    flex: 1;
    min-height: 0;
}
.canvas {
    position: relative;
    flex: 1;
    min-width: 0;
    overflow: hidden;
    background: #ebebf1;
}
.paper {
    width: 713px;
    height: 100%;
    border-right: 1px solid #cfd0d6;
    background: #fff;
}
.diagram {
    position: absolute;
    left: 0;
    top: 0;
    width: 100%;
    height: 100%;
}
.wires path, .node {
    fill: none;
    stroke: #14141c;
}
.node {
    fill: #fff;
}
.diagram text {
    font-family: "Liberation Sans", Arial, sans-serif;
    font-size: 10px;
    text-anchor: middle;
    fill: #111;
}
.selection rect {
    fill: none;
    stroke: #1576d6;
    stroke-dasharray: 5 5;
}
.selection .handle {
    fill: #fff;
    stroke: #1576d6;
    stroke-dasharray: none;
    stroke-width: 1;
}
.spin {
    fill: none;
    stroke: #1576d6;
}
.fold {
    fill: #fff;
    stroke: #9a9a9a;
    stroke-width: 2;
}
.fold path {
    fill: #9a9a9a;
    stroke: none;
}
.arrow {
    fill: #e8050a;
}
.scroll-y {
    width: 14px;
    flex: none;
    padding: 69px 2px 0;
}
.scroll-y span {
    display: block;
    height: 78%;
    border-radius: 5px;
    background: #d0d1d4;
}
.scroll-x {
    height: 15px;
    flex: none;
    padding: 3px 25px 0 239px;
}
.scroll-x span {
    display: block;
    height: 10px;
    border-radius: 5px;
    background: #d0d1d4;
}
.palette {
    display: flex;
    align-items: center;
    flex: none;
    height: 17px;
    border-top: 1px solid #e6e7ec;
}
.palette button {
    gap: 1px;
    width: 24px;
    margin-left: 11px;
}
.palette button .icon {
    width: 14px;
    height: 14px;
}
.palette-colors {
    display: flex;
    flex: 1;
    gap: 2px;
}
.palette-colors span {
    flex: 1;
    height: 15px;
    border-radius: 3px;
}

/* Floating toolbar */
.floatbar {
    position: absolute;
    left: 34px;
    top: 139px;
    display: flex;
    height: 79px;
    padding: 8px 0;
    border-radius: 8px;
    background: #fff;
    box-shadow: 0 3px 10px rgba(0, 0, 0, 0.16);
}
.float-item {
    flex-direction: column;
    width: 40px;
    padding-top: 7px;
    font-size: 11px;
    line-height: 13px;
}
.float-item .icon {
    width: 18px;
    height: 18px;
    margin-bottom: 12px;
    stroke-width: 1.6;
}
.float-item .icon .bar {
    stroke: #14143c;
}
.float-item.ai {
    width: 60px;
}
.float-item.painter {
    width: 56px;
}
.painter + .divider {
    margin-right: 5px;
}
.float-item .icon.ai-icon {
    width: 20px;
    height: 20px;
    margin-bottom: 10px;
}
.float-item.hand {
    width: 76px;
}
.float-item.front {
    width: 62px;
}
.floatbar .divider {
    height: 64px;
}
.hand ~ .divider, .painter ~ .divider {
    margin-left: 4px;
}
.painter + .divider, .hand + .divider {
    margin-left: 0;
}
.float-font {
    width: 162px;
    padding-left: 10px;
}
.float-font .row {
    height: 24px;
    gap: 6px;
}
.float-font .row + .row {
    gap: 2px;
    height: 34px;
    margin-left: -2px;
}
.float-font .family {
    width: 90px;
}
.float-font .size {
    width: 48px;
}
.float-font .combo select {
    padding: 0 7px;
}
.float-font .combo .icon + select {
    padding-left: 3px;
}
.float-font .tool {
    width: 28px;
}
.assist {
    position: absolute;
    right: 17px;
    bottom: 16px;
    display: flex;
    align-items: center;
    width: 89px;
    height: 40px;
    padding: 0 4px;
    border-radius: 20px;
    background: #fff;
    box-shadow: 0 2px 6px rgba(0, 0, 0, 0.12);
}
.assist button {
    flex: 1;
    justify-content: center;
}
.assist .divider {
    height: 24px;
}

/* Right rail */
.right-rail {
    display: flex;
    flex-direction: column;
    flex: none;
    width: 35px;
    border-left: 1px solid #e6e7ec;
}
.right-rail button {
    justify-content: center;
    height: 32px;
    padding-left: 1px;
}
.right-rail .active {
    height: 35px;
    margin-bottom: 11px;
    background: #0080ff;
}
.right-rail .active .icon {
    color: #fff;
    stroke-width: 1.2;
}
.right-rail .last {
    margin-top: auto;
}

/* Status bar */
.statusbar {
    display: flex;
    align-items: center;
    flex: none;
    height: 32px;
    background: #f2f3f9;
}
.statusbar .divider {
    height: 22px;
}
.status-tool {
    width: 32px;
    justify-content: center;
}
.statusbar > .status-tool {
    width: 48px;
    padding-left: 7px;
}
.statusbar .combo {
    border: none;
}
.page {
    width: 128px;
}
.combo.page select {
    padding-left: 16px;
}
.combo.page::after {
    right: 13px;
}
.add {
    width: 40px;
    justify-content: center;
}
.add .icon {
    width: 14px;
    height: 14px;
}
.page-tab {
    width: 72px;
    text-align: center;
    font-weight: bold;
    color: #1576d6;
}
.status-right {
    display: flex;
    align-items: center;
    margin-left: auto;
    padding-right: 12px;
}
.stat {
    padding: 0 6px;
}
.layers {
    gap: 4px;
    padding-left: 10px;
}
.focus {
    gap: 8px;
    margin-left: 16px;
}
.play {
    margin: 0 12px;
}
.zoom-step {
    width: 30px;
    justify-content: center;
}
.zoom-step .icon {
    width: 14px;
    height: 14px;
}
.percent {
    width: 62px;
}
.combo.percent select {
    padding: 0 10px;
}
.combo.percent::after {
    right: 14px;
}
input[type="range"] {
    width: 96px;
    height: 14px;
    margin: 0 1px;
    appearance: none;
    background: none;
}
input[type="range"]::-webkit-slider-runnable-track {
    height: 3px;
    border-radius: 2px;
    background: linear-gradient(90deg, #3c3c3e 14%, #fff 14%);
}
input[type="range"]::-webkit-slider-thumb {
    appearance: none;
    width: 12px;
    height: 12px;
    margin-top: -5px;
    border: 2px solid #3c3c3e;
    border-radius: 50%;
    background: #fff;
}
```
FILE: script.js
```js
// Fill menu colours
var recent = ["#e6f7f3", "#eaeaea", "#fff4e6", "#c8ff7d", "#ff9f1a", "#e7e7f4", "#ff7d7a", "#d6d6d6", "#b2e9df", "#000000"];
var standard = ["#c00000", "#ff0000", "#ffc000", "#ffff00", "#92d050", "#00b050", "#00b0f0", "#0070c0", "#002060", "#7030a0"];
var theme = [
    ["#ffffff", "#000000", "#50d7c4", "#467dff", "#4054c6", "#ff7d7a", "#ffcb52", "#8cbfff", "#7890ff", "#ff9f1a"],
    ["#eaeaea", "#7d7d7d", "#e6f7f3", "#e8eaff", "#e7e7f4", "#ffeaea", "#fff4e6", "#ebf3ff", "#ebecff", "#fff0e6"],
    ["#d6d6d6", "#686868", "#cff0e9", "#ced6ff", "#cfd0e9", "#ffd6d6", "#ffebce", "#dae8ff", "#d7dbff", "#ffdec8"],
    ["#c2c2c2", "#585858", "#b2e9df", "#b0bfff", "#b0b4de", "#ffc0c0", "#ffe1b2", "#c7dcff", "#bec6ff", "#ffcaa6"],
    ["#aeaeae", "#444444", "#8ee2d2", "#8aa2ff", "#868fd2", "#ffa3a1", "#ffd78c", "#adceff", "#9fadff", "#ffb47c"],
    ["#9a9a9a", "#303030", "#46bfac", "#3d6de0", "#384aae", "#e06d6a", "#e0b248", "#7ba8e0", "#697ee0", "#e08a14"],
    ["#868686", "#1a1a1a", "#3a9f90", "#325bba", "#2e3d90", "#ba5a58", "#ba943c", "#668cba", "#5768ba", "#ba7210"]
];

// Colour strip under the canvas, five shades per hue
var strip = [
    "#a01020", "#c8102e", "#e64864", "#f26a82", "#f59fb0", "#2a7f90", "#3ba8c0", "#45bfdd", "#62d8e8", "#a8f0fa",
    "#f0592b", "#fa823c", "#fa9628", "#ffb818", "#ffc465", "#1c927c", "#1eb49a", "#20ccb0", "#6cd6c2", "#86ecd8",
    "#963060", "#c44e8c", "#e068a8", "#f48acc", "#f0c2dc", "#648c1c", "#78a22c", "#9abe28", "#b0d050", "#d0e08e",
    "#2028a8", "#3440d8", "#6c46f0", "#9070f4", "#b092f4", "#f8cc10", "#fadc38", "#f0ea30", "#faf850", "#fcfc84",
    "#9c50d8", "#c450e0", "#d470f0", "#c288fa", "#dc9ffa", "#2c8044", "#3ca058", "#58b078", "#68be8c", "#94d8ac",
    "#dc3830", "#fa4a3e", "#f86868", "#ff7c80", "#ff9488", "#2640a0", "#3058d0", "#386af0", "#6890ff", "#8cb2f4",
    "#703008", "#8c3c04", "#a84628", "#cc6244", "#de7a5c", "#1c8cd8", "#309cec", "#4ab0ff", "#40d0ff", "#6ce4ff",
    "#7a5038", "#946044", "#b47250", "#d48862", "#f29c70", "#8c8278", "#b2ae9e", "#ceccb8", "#e0dccc", "#f4eedc",
    "#1a1a1a", "#303030", "#444444", "#585858", "#7d7d7d", "#bcbcbc", "#cccccc", "#d8d8d8", "#e6e6e6", "#f2f2f2", "#ffffff"
];

function addSwatches(id, colors) {
    var box = document.getElementById(id);
    colors.forEach(function (color) {
        var swatch = document.createElement("button");
        swatch.style.background = color;
        swatch.setAttribute("aria-label", color);
        box.appendChild(swatch);
    });
}
addSwatches("recent", recent);
addSwatches("standard", standard);
theme.forEach(function (row) {
    addSwatches("theme", row);
});
strip.forEach(function (color) {
    var cell = document.createElement("span");
    cell.style.background = color;
    document.getElementById("palette").appendChild(cell);
});

// Library shapes on a 40 x 40 cell; true = shape has a yellow control point
var shapes = [
    ["M4.5 4.500h32v32h-32z"],
    ["M2.5 10.500h35v20h-35z"],
    ["M4 20a16 16 0 1 1 32 0a16 16 0 1 1-32 0"],
    ["M5 20a15 15 0 1 1 30 0a15 15 0 1 1-30 0"],
    ["M6.5 4.500h28q2 0 2 2v28q0 2-2 2h-28q-2 0-2-2v-28q0-2 2-2"],
    ["M5.5 9.500h29q3 0 3 3v15q0 3-3 3h-29q-3 0-3-3v-15q0-3 3-3", true],
    ["M5.5 9.500h29q3 0 3 3v15q0 3-3 3h-29q-3 0-3-3v-15q0-3 3-3"],
    ["M2.5 9.500h29q6 0 6 7v14h-35z", true],
    ["M3.5 30.500v-14q0-6 6-6h22q6 0 6 6v14z", true],
    ["M3.500 10.500h26q8 0 8 8v12h-26q-8 0-8-8z", true],
    ["M2.500 10.500h35v20h-35zM6.500 13.500h27v14h-27z", true],
    ["M20 5 37.500 35.500h-35z"],
    ["M3.500 35.500 29.500 5 38 35.500z"],
    ["M20.500 5.500 36 34.500H5z", true],
    ["M10 4.500h20l6 6v20l-6 6H10l-6-6v-20z"],
    ["M20 4.500 36 16.500 30.500 35.500h-20L4.500 16.500z"],
    ["M20 4.500 36 20 20 35.500 4.500 20z"],
    ["M2.500 20a17.500 12 0 1 1 35 0a17.500 12 0 1 1-35 0"],
    ["M4 20a16 16 0 1 1 32 0a16 16 0 1 1-32 0M13 20a7 7 0 1 1 14 0a7 7 0 1 1-14 0", true],
    ["M4 20a16 16 0 1 1 32 0a16 16 0 1 1-32 0M8 20a12 12 0 1 1 24 0a12 12 0 1 1-24 0", true],
    ["M2.500 30.500 12 10.500h25.500l-9.500 20z", true],
    ["M2.500 30.500 11 10.500h18l8.500 20z", true],
    ["M18 6.500q2-3.500 4 0l15 25q1 3-2 3.500H5q-3-.5-2-3.500z"],
    ["M4.500 4.500v31H36z"],
    ["M3.500 30V17q0-5 5-5h23q5 0 5 5v13z"],
    ["M20 9 37 18v18H3V18z"],
    ["M20 5.500 36 17 30 36H10L4 17z"],
    ["M11.500 5.500h17l9 15-9 15h-17l-9-15z"]
];
shapes.forEach(function (shape) {
    var knob = shape[1] ? '<circle class="knob" cx="3" cy="3" r="2.500"/>' : "";
    document.getElementById("shapes").innerHTML +=
        '<button aria-label="Shape"><svg><path d="' + shape[0] + '"/>' + knob + "</svg></button>";
});

// Rulers: a labelled tick every 20 mm and three small ones between
var step = 48.47;
function tickMarks(start, count, vertical) {
    var out = "";
    for (var i = 0; i < count; i++) {
        var at = Math.round(start + i * step);
        var label = i * 20;
        for (var k = 0; k < 4; k++) {
            var p = Math.round(start + (i + k / 4) * step) + 0.5;
            var from = k === 0 ? 0 : 10;
            out += vertical ? '<path d="M' + from + " " + p + 'H18"/>' : '<path d="M' + p + " " + from + 'V18"/>';
        }
        if (i === 0) continue;
        out += vertical
            ? '<text transform="translate(10 ' + (at + 18 - (label < 100 ? 4 : 0)) + ') rotate(-90)">' + label + "</text>"
            : '<text x="' + (at + 3) + '" y="10">' + label + "</text>";
    }
    return out;
}
document.getElementById("ruler-x").innerHTML = tickMarks(-6, 22, false);
document.getElementById("ruler-y").innerHTML = tickMarks(-24, 11, true);

// Org chart boxes: x, y, width, height, lines of text
var nodes = [
    [315, 31, 78, 46, "CEO"],
    [78, 225, 78, 36, "Creative", "Strategist"],
    [78, 291, 78, 37, "Senior", "Designer"],
    [78, 358, 78, 36, "Associate", "Director"],
    [249, 225, 77, 36, "Account", "Manager"],
    [249, 291, 77, 37, "Account", "Executive"],
    [249, 358, 77, 36, "Coordinator"],
    [419, 225, 78, 36, "Senior", "Strategist"],
    [419, 291, 78, 37, "Market Analyst"],
    [419, 358, 78, 36, "Media Planner"],
    [594, 225, 78, 36],
    [594, 291, 78, 37],
    [594, 358, 78, 36, "Editorial Team"]
];
nodes.forEach(function (n) {
    var lines = n.slice(4);
    var cx = n[0] + n[2] / 2;
    var y = n[1] + n[3] / 2 + 4 - (lines.length - 1) * 6;
    var out = '<rect class="node" x="' + (n[0] + 0.5) + '" y="' + (n[1] + 0.5) + '" width="' + (n[2] - 1) + '" height="' + n[3] + '"/>';
    lines.forEach(function (line, i) {
        out += '<text x="' + cx + '" y="' + (y + i * 12) + '">' + line + "</text>";
    });
    document.getElementById("nodes").innerHTML += out;
});

// Resize handles round the selected box
[315, 353, 392].forEach(function (x) {
    [31, 54, 76].forEach(function (y) {
        if (x === 353 && y === 54) return;
        document.getElementById("handles").innerHTML +=
            '<rect class="handle" x="' + (x - 3.5) + '" y="' + (y - 3.5) + '" width="8" height="8"/>';
    });
});
```
